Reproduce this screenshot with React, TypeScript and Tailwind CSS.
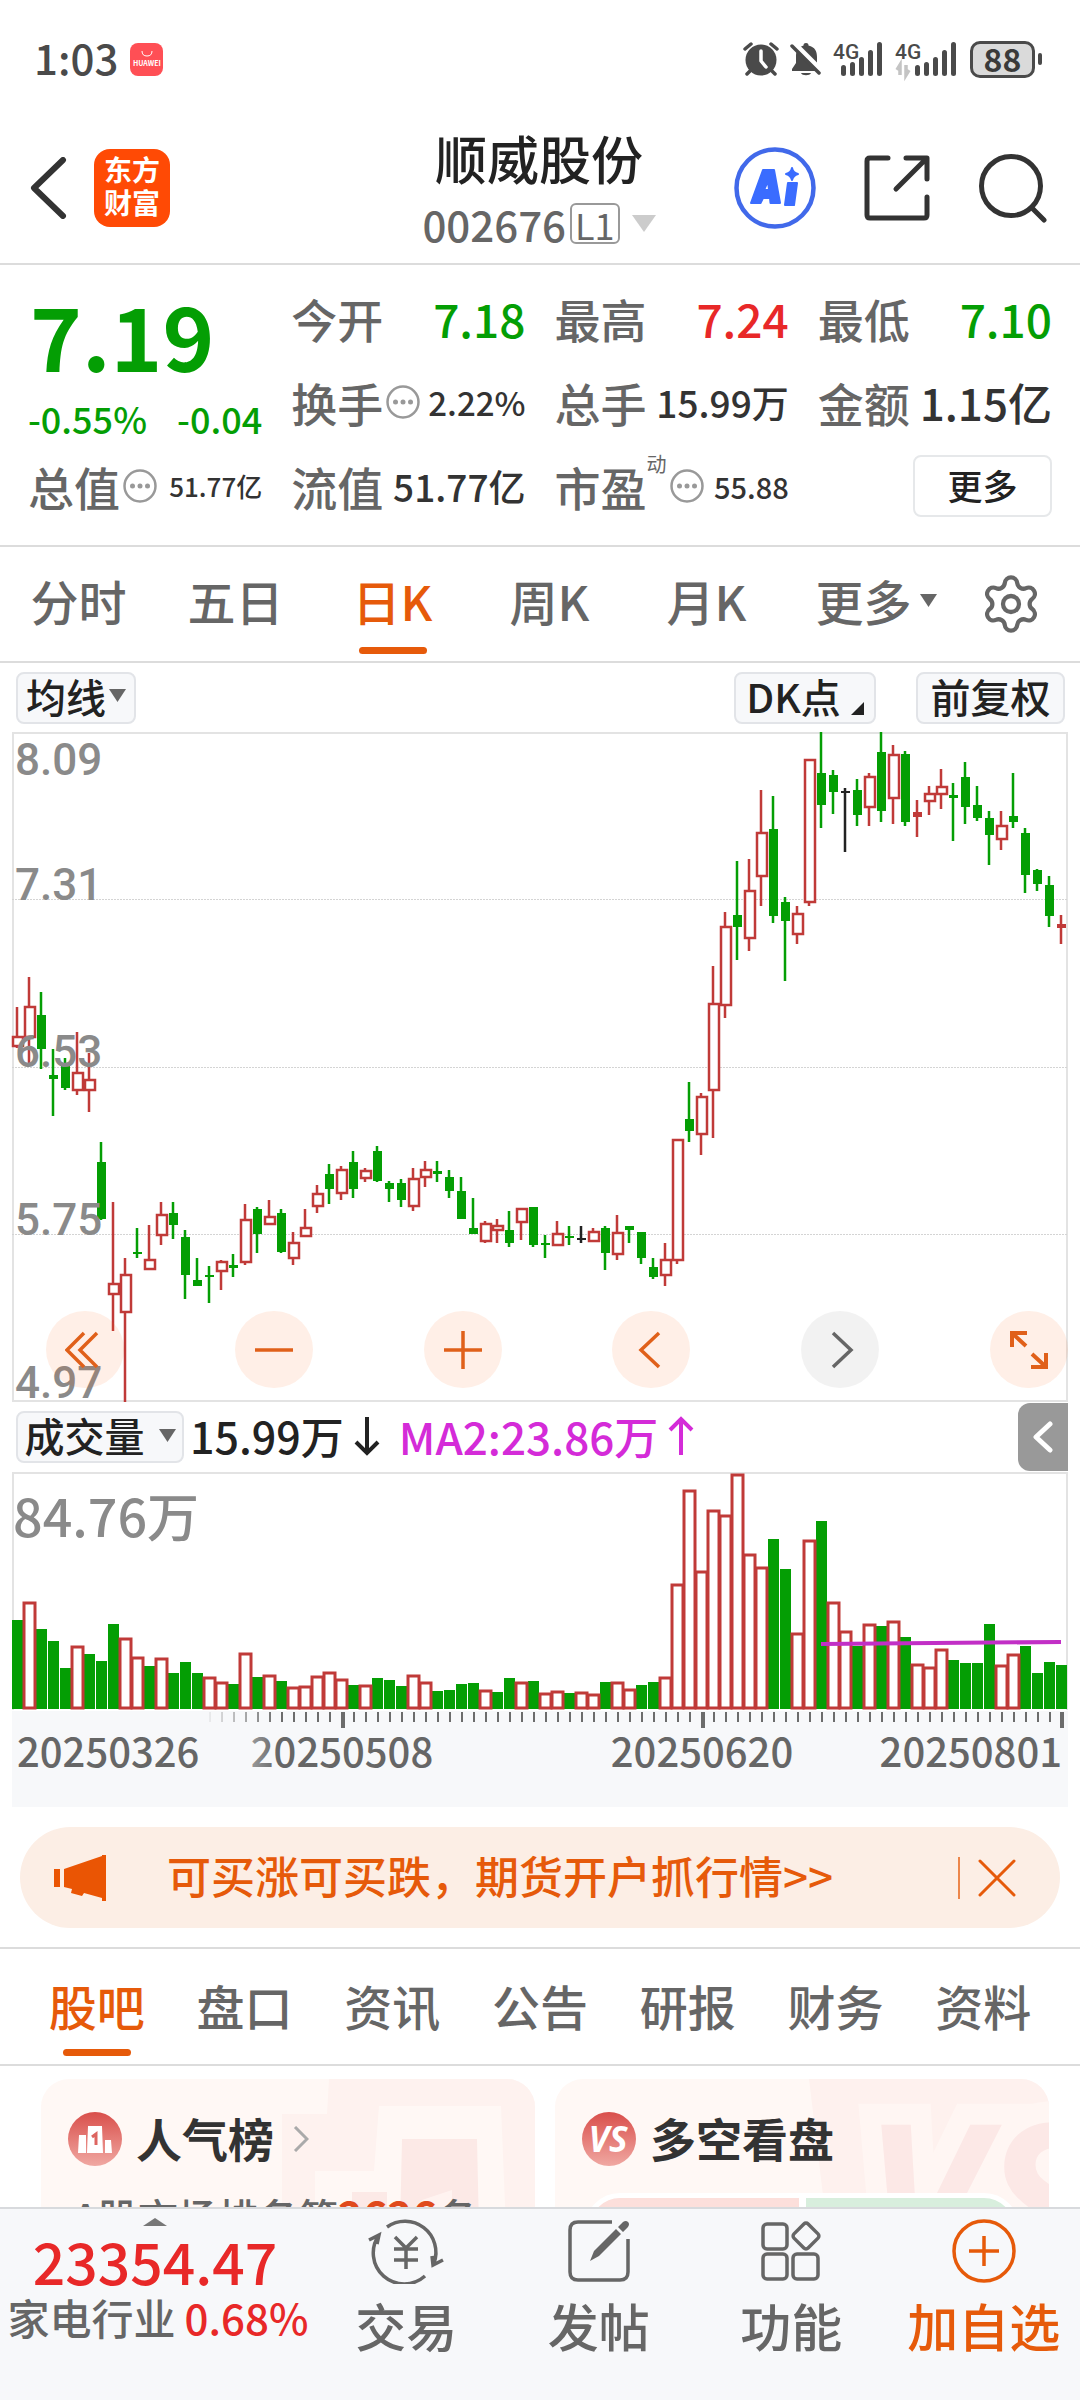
import React from "react";
import { Settings } from "lucide-react";

type Kind = "r" | "g" | "k" | "R";
type Candle = [Kind, number, number, number, number];

const RED = "#c03a38";
const GREEN = "#049e04";
const INK = "#222222";
const FONT = "font-['Noto_Sans_CJK_SC','Noto_Sans',sans-serif]";

// kind, high, body top, body bottom, low — in chart units measured downwards
const CANDLES: Candle[] = [
  ["r", 643, 708, 732, 735], ["r", 575, 640, 712, 768], ["g", 609, 662, 738, 782], ["g", 738, 796, 804, 887],
  ["g", 758, 770, 825, 830], ["r", 700, 789, 832, 840], ["r", 747, 804, 832, 878], ["g", 945, 990, 1118, 1120],
  ["r", 1080, 1262, 1289, 1368], ["r", 1206, 1242, 1328, 1528], ["g", 1138, 1191, 1195, 1205], ["r", 1132, 1208, 1231, 1231],
  ["r", 1080, 1107, 1155, 1176], ["g", 1080, 1105, 1132, 1162], ["g", 1142, 1158, 1243, 1297], ["g", 1206, 1254, 1268, 1268],
  ["g", 1224, 1244, 1248, 1306], ["r", 1210, 1213, 1236, 1277], ["g", 1196, 1222, 1227, 1248], ["r", 1085, 1117, 1217, 1220],
  ["g", 1090, 1095, 1151, 1195], ["r", 1076, 1111, 1131, 1131], ["g", 1095, 1105, 1191, 1195], ["r", 1148, 1170, 1207, 1220],
  ["r", 1095, 1136, 1159, 1159], ["r", 1042, 1059, 1092, 1104], ["g", 994, 1018, 1050, 1084], ["r", 999, 1006, 1063, 1075],
  ["g", 965, 990, 1050, 1070], ["r", 1004, 1009, 1029, 1036], ["g", 955, 965, 1032, 1036], ["g", 1033, 1038, 1050, 1080],
  ["g", 1028, 1037, 1075, 1090], ["r", 1004, 1025, 1092, 1099], ["r", 989, 1005, 1025, 1046], ["g", 989, 1010, 1017, 1036],
  ["g", 1008, 1023, 1055, 1071], ["g", 1023, 1056, 1118, 1118], ["g", 1071, 1138, 1152, 1152], ["r", 1123, 1126, 1169, 1171],
  ["r", 1119, 1131, 1144, 1171], ["g", 1100, 1142, 1172, 1181], ["r", 1093, 1093, 1126, 1166], ["g", 1090, 1091, 1175, 1181],
  ["g", 1153, 1172, 1176, 1205], ["r", 1123, 1150, 1179, 1179], ["g", 1133, 1155, 1161, 1176], ["k", 1133, 1160, 1164, 1171],
  ["r", 1138, 1145, 1169, 1169], ["g", 1133, 1138, 1195, 1233], ["r", 1109, 1146, 1198, 1210], ["g", 1133, 1133, 1142, 1171],
  ["g", 1147, 1148, 1205, 1219], ["g", 1205, 1225, 1248, 1252], ["r", 1172, 1208, 1245, 1268], ["r", 939, 939, 1213, 1219],
  ["g", 811, 894, 921, 945], ["r", 836, 842, 929, 974], ["r", 551, 635, 832, 936], ["r", 431, 462, 640, 667],
  ["g", 316, 437, 464, 537], ["r", 311, 380, 491, 517], ["r", 157, 251, 352, 417], ["g", 171, 244, 440, 455],
  ["g", 397, 407, 450, 585], ["r", 417, 433, 482, 502], ["r", 87, 87, 409, 417], ["g", 27, 119, 190, 243],
  ["g", 113, 123, 161, 210], ["k", 152, 159, 164, 296], ["g", 132, 157, 214, 237], ["r", 119, 125, 197, 238],
  ["g", 27, 71, 204, 228], ["r", 56, 77, 178, 234], ["g", 69, 76, 228, 238], ["R", 180, 207, 217, 262],
  ["r", 148, 164, 184, 214], ["r", 109, 149, 168, 199], ["g", 142, 168, 175, 272], ["g", 95, 128, 195, 234],
  ["g", 148, 190, 220, 227], ["g", 205, 220, 258, 325], ["r", 205, 236, 269, 291], ["g", 119, 215, 228, 243],
  ["g", 243, 253, 348, 388], ["g", 334, 336, 367, 383], ["g", 349, 369, 440, 464], ["R", 436, 457, 467, 502],
];

const VOLUMES: [Kind, number][] = [
  ["g", 690], ["r", 633], ["g", 716], ["g", 753], ["g", 834], ["r", 764], ["g", 790], ["g", 811], ["g", 702], ["r", 741], ["r", 796],
  ["g", 828], ["r", 800], ["g", 849], ["g", 816], ["g", 849], ["r", 856], ["r", 873], ["g", 881], ["r", 784], ["g", 861], ["r", 852],
  ["g", 873], ["r", 888], ["r", 884], ["r", 853], ["r", 841], ["r", 862], ["g", 884], ["r", 881], ["g", 864], ["g", 868], ["g", 888],
  ["r", 852], ["r", 872], ["g", 903], ["g", 899], ["g", 880], ["g", 878], ["r", 896], ["g", 904], ["g", 862], ["r", 871], ["g", 871],
  ["r", 906], ["r", 900], ["g", 909], ["r", 903], ["r", 907], ["g", 876], ["r", 871], ["r", 892], ["g", 885], ["g", 876], ["r", 858],
  ["r", 578], ["r", 297], ["r", 539], ["r", 355], ["r", 370], ["r", 247], ["r", 487], ["r", 528], ["g", 445], ["g", 537], ["r", 724],
  ["r", 446], ["g", 391], ["r", 631], ["r", 718], ["g", 767], ["r", 697], ["g", 708], ["r", 690], ["g", 740], ["r", 818], ["r", 827],
  ["r", 773], ["g", 809], ["g", 819], ["g", 819], ["g", 702], ["r", 822], ["r", 787], ["g", 766], ["g", 847], ["g", 816], ["g", 823],
];

const cx = (i: number) => 5 + i * 12;
const py = (v: number) => Math.round((v - 27) / 2.24);
const vy = (v: number) => Math.round((v - 245) / 3);

function StatusBar() {
  return (
    <div className="flex h-[118px] items-center justify-between pl-[34px] pr-[38px] text-[#4a4a4a]">
      <div className="flex items-center gap-[12px]">
        <span className="pb-[4px] text-[42px] font-medium leading-none">1:03</span>
        <span className="flex h-[33px] w-[33px] flex-col items-center justify-center rounded-[8px] bg-[#ff4f55] text-white">
          <svg viewBox="0 0 12 8" className="h-[8px] w-[12px]" fill="none" stroke="currentColor">
            <path d="M1 1 Q1 6 6 6 Q11 6 11 1" />
          </svg>
          <span className="text-[7px] font-bold leading-[10px]">HUAWEI</span>
        </span>
      </div>
      <div className="flex items-center">
        <svg viewBox="0 0 36 34" className="mr-[11px] h-[34px] w-[36px]" fill="currentColor">
          <circle cx="18" cy="18" r="15.5" />
          <path d="M2 7 L8 2 M34 7 L28 2 M7 29 L4 32 M29 29 L32 32" stroke="currentColor" strokeWidth="3.5" strokeLinecap="round" />
          <path d="M18 9 V19 L23 25" fill="none" stroke="#fff" strokeWidth="3.5" strokeLinecap="round" strokeLinejoin="round" />
        </svg>
        <svg viewBox="0 0 32 34" className="mr-[11px] h-[34px] w-[32px]" fill="currentColor">
          <path d="M16 1 C18 1 18.500 2 18.500 3.500 C25 5 27 9.500 27 15 V21 L30 27 V29 H2 V27 L6 21 V14 C6 8.500 8.500 5 13.500 3.500 C13.500 2 14 1 16 1Z" />
          <path d="M11 31 H21 C20 34 12 34 11 31Z" />
          <path d="M4 1 L34 31" stroke="#fff" strokeWidth="5" />
          <path d="M2 4 L29 31" stroke="currentColor" strokeWidth="3.500" strokeLinecap="round" />
        </svg>
        <Signal />
        <Signal data />
        <span className="flex h-[37px] w-[65px] items-center justify-center rounded-[10px] border-[3px] border-[#4a4a4a] bg-[#dadada] pb-[2px] text-[32px] font-bold leading-none text-[#3a3a3a]">
          88
        </span>
        <span className="ml-[3px] h-[12px] w-[4px] rounded-[2px] bg-[#4a4a4a]" />
      </div>
    </div>
  );
}

function Signal({ data = false }: { data?: boolean }) {
  const bars = [11, 14, 19, 26, 34];
  const x0 = data ? 20 : 8;
  return (
    <svg viewBox={data ? "0 0 62 36" : "0 0 50 36"} className={data ? "mr-[13px] h-[36px] w-[62px] overflow-visible" : "mr-[12px] h-[36px] w-[50px] overflow-visible"} fill="currentColor">
      <text x="0" y="18" fontSize="21" fontWeight="500" className="font-['Roboto',sans-serif]">4G</text>
      {bars.map((h, i) => (
        <rect key={i} x={x0 + i * 9} y={35 - h} width="5" height={h} rx="2.5" />
      ))}
      {data && <path d="M5 34 V24 L2 29 M11 24 V34 L14 29" fill="none" stroke="#c4c4c4" strokeWidth="3.500" />}
    </svg>
  );
}

function Header() {
  return (
    <header className="grid h-[147px] grid-cols-[1fr_auto_1fr] items-center border-b-2 border-[#dcdcdc] pl-[30px] pr-[32px] pb-[6px] text-[#333]">
      <div className="flex items-center gap-[26px]">
        <button aria-label="返回">
          <svg viewBox="0 0 38 62" className="h-[62px] w-[38px]" fill="none" stroke="currentColor" strokeWidth="6" strokeLinecap="round" strokeLinejoin="round">
            <path d="M33 3 L4 31 L33 59" />
          </svg>
        </button>
        <div className="flex h-[78px] w-[76px] flex-col items-center justify-center rounded-[16px] bg-[#ff4a05] pb-[3px] text-[28px] font-bold leading-[33px] text-white">
          <span>东方</span>
          <span>财富</span>
        </div>
      </div>
      <div className="flex flex-col items-center gap-[16px]">
        <h1 className="text-[52px] font-medium leading-[56px] text-[#222]">顺威股份</h1>
        <button className="flex items-center text-[42px] font-medium leading-[44px] text-[#666]">
          002676
          <span className="ml-[4px] flex h-[41px] items-center rounded-[6px] border-2 border-[#999] px-[3px] text-[36px] font-normal leading-none">L1</span>
          <svg viewBox="0 0 24 17" className="ml-[12px] h-[17px] w-[24px]" fill="#ccc"><path d="M0 0 H24 L12 17Z" /></svg>
        </button>
      </div>
      <div className="flex items-center justify-end gap-12">
        <button aria-label="AI">
          <svg viewBox="0 0 82 82" className="h-[82px] w-[82px]">
            <circle cx="41" cy="41" r="38.500" fill="none" stroke="#4169ea" strokeWidth="4.500" />
            <g fill="#3a6cff" stroke="#3a6cff" strokeWidth="2" strokeLinejoin="round">
              <path fillRule="evenodd" d="M29 23 H40 L46 56 H36.500 L36 51 H29 L26.500 56 H17Z M34 34 L30 43 H35Z" />
              <path d="M54 36 H63 L60 58 H51Z" />
              <path d="M58 21 Q59 26 64 27 Q59 28.500 58 33 Q57 28.500 52 27 Q57 26 58 21Z" />
            </g>
          </svg>
        </button>
        <button aria-label="分享">
          <svg viewBox="0 0 66 66" className="h-[66px] w-[66px]" fill="none" stroke="currentColor" strokeWidth="5" strokeLinecap="round" strokeLinejoin="round">
            <path d="M24 3 H6 Q3 3 3 6 V60 Q3 63 6 63 H60 Q63 63 63 60 V42" />
            <path d="M42 3 H63 V24 M61 5 L32 34" />
          </svg>
        </button>
        <button aria-label="搜索">
          <svg viewBox="0 0 70 70" className="h-[70px] w-[70px]" fill="none" stroke="currentColor" strokeWidth="5" strokeLinecap="round">
            <circle cx="33" cy="33" r="29.500" />
            <path d="M54 55 L66 67" />
          </svg>
        </button>
      </div>
    </header>
  );
}

function Info() {
  return (
    <svg viewBox="0 0 34 34" className="ml-[3px] h-[34px] w-[34px] shrink-0" fill="#999">
      <circle cx="17" cy="17" r="15.500" fill="none" stroke="#999" strokeWidth="2.500" />
      <circle cx="9.500" cy="17" r="2.500" />
      <circle cx="17" cy="17" r="2.500" />
      <circle cx="24.500" cy="17" r="2.500" />
    </svg>
  );
}

function Stat({ label, value, valueClass, info, sup }: { label: string; value: string; valueClass: string; info?: boolean; sup?: string }) {
  return (
    <div className="flex items-center justify-between whitespace-nowrap leading-none">
      <div className="flex items-center">
        <dt className="text-[46px] font-medium text-[#666]">{label}</dt>
        {sup && <sup className="mb-[24px] text-[20px] leading-none text-[#666]">{sup}</sup>}
        {info && <Info />}
      </div>
      <dd className={valueClass}>{value}</dd>
    </div>
  );
}

function Quote() {
  return (
    <section className="border-b-2 border-[#dcdcdc] px-[28px] pb-[17px] pt-[11px]">
      <dl className="grid grid-cols-4 grid-rows-[84px_84px_84px] gap-x-[29px]">
        <div className="row-span-2 flex flex-col gap-[12px] whitespace-nowrap leading-none text-[#049e04]">
          <strong className="pl-[2px] pt-[4px] text-[88px] font-bold leading-[108px]">7.19</strong>
          <div className="flex justify-between text-[36px] font-medium">
            <span>-0.55%</span>
            <span>-0.04</span>
          </div>
        </div>
        <Stat label="今开" value="7.18" valueClass="text-[46px] font-medium text-[#049e04]" />
        <Stat label="最高" value="7.24" valueClass="text-[46px] font-medium text-[#e82828]" />
        <Stat label="最低" value="7.10" valueClass="text-[46px] font-medium text-[#049e04]" />
        <Stat label="换手" info value="2.22%" valueClass="text-[33px] font-medium text-[#333]" />
        <Stat label="总手" value="15.99万" valueClass="text-[37px] font-medium text-[#333]" />
        <Stat label="金额" value="1.15亿" valueClass="text-[44px] font-medium text-[#333]" />
        <Stat label="总值" info value="51.77亿" valueClass="text-[26px] font-medium text-[#333]" />
        <Stat label="流值" value="51.77亿" valueClass="text-[37px] font-medium text-[#333]" />
        <Stat label="市盈" sup="动" info value="55.88" valueClass="text-[29px] font-medium text-[#333]" />
        <div className="flex items-center justify-end">
          <button className="h-[62px] w-[139px] rounded-[8px] border-2 border-[#e6e8ea] pb-[3px] text-[35px] font-medium leading-none text-[#222]">更多</button>
        </div>
      </dl>
    </section>
  );
}

function PeriodTabs() {
  const tabs = ["分时", "五日", "日K", "周K", "月K", "更多"];
  return (
    <nav className="flex h-[116px] border-b-2 border-[#dcdcdc] font-medium text-[#666]">
      {tabs.map((t) => (
        <button key={t} className={t === "日K" ? "relative flex flex-1 items-center justify-center pb-[8px] text-[48px] leading-none text-[#e65a0a]" : "flex flex-1 items-center justify-center whitespace-nowrap pb-[8px] text-[48px] leading-none"}>
          {t}
          {t === "日K" && <span className="absolute bottom-[7px] h-[7px] w-[68px] rounded-full bg-[#e65a0a]" />}
          {t === "更多" && <Down className="-mr-[25px] ml-[8px] h-[13px] w-[17px]" />}
        </button>
      ))}
      <button aria-label="设置" className="flex w-[138px] items-center justify-center">
        <Settings className="h-[64px] w-[64px]" strokeWidth={1.6} />
      </button>
    </nav>
  );
}

function Down({ className }: { className: string }) {
  return <svg viewBox="0 0 17 13" className={className} fill="#666"><path d="M0 0 H17 L8.500 13Z" /></svg>;
}

function Chip({ children, className }: { children: React.ReactNode; className: string }) {
  return (
    <button className={`${className} flex h-[52px] items-center justify-center whitespace-nowrap rounded-[8px] border-2 border-[#e2e4e8] bg-[#f7f8fa] pb-[4px] text-[40px] font-medium leading-none text-[#222]`}>
      {children}
    </button>
  );
}

function PriceChart() {
  return (
    <svg viewBox="0 0 1056 670" className="block h-auto w-full overflow-visible" role="img" aria-label="日K线图">
      <rect x="1" y="1" width="1054" height="668" fill="none" stroke="#e3e3e3" strokeWidth="2" />
      {[167, 335, 502].map((y) => (
        <path key={y} d={`M0 ${y + 0.5} H1056`} stroke="#d4d4d4" strokeDasharray="2 1" />
      ))}
      {CANDLES.map(([k, hi, top, bot, lo], i) => {
        const x = cx(i);
        const color = k === "g" ? GREEN : k === "k" ? INK : RED;
        const t = py(top);
        const h = Math.max(py(bot) - t, 2);
        return (
          <g key={i}>
            <rect x={x - 1.25} y={py(hi)} width="2.5" height={py(lo) - py(hi)} fill={color} />
            {k === "r" ? (
              <rect x={x - 4} y={t + 1} width="10" height={Math.max(h - 2, 3)} fill="#fff" stroke={color} strokeWidth="2.5" />
            ) : (
              <rect x={x - 4} y={t} width="9" height={h} fill={color} />
            )}
          </g>
        );
      })}
      <g fill="#8a8a8a" fontSize="44" fontWeight="500" className="font-['Roboto',sans-serif]">
        <text x="3" y="43">8.09</text>
        <text x="3" y="168">7.31</text>
        <text x="3" y="335">6.53</text>
        <text x="3" y="503">5.75</text>
        <text x="3" y="666">4.97</text>
      </g>
    </svg>
  );
}

const ctl = "flex h-[77px] w-[78px] items-center justify-center rounded-full bg-[#fe6410]/10 text-[#e0601a]";

function ChartControls() {
  const s = { fill: "none", stroke: "currentColor", strokeWidth: 3.5, viewBox: "0 0 40 40", className: "h-[40px] w-[40px]" };
  return (
    <div className="absolute bottom-[14px] left-[34px] right-0 flex justify-between">
      <button className={ctl} aria-label="最早"><svg {...s}><path d="M19 3 L2 20 L19 37 M32 3 L15 20 L32 37" /></svg></button>
      <button className={ctl} aria-label="缩小"><svg {...s}><path d="M1 20 H39" /></svg></button>
      <button className={ctl} aria-label="放大"><svg {...s}><path d="M1 20 H39 M20 1 V39" /></svg></button>
      <button className={ctl} aria-label="左移"><svg {...s}><path d="M28 3 L10 20 L28 37" /></svg></button>
      <button className="flex h-[77px] w-[78px] items-center justify-center rounded-full bg-black/5 text-[#666]" aria-label="右移"><svg {...s}><path d="M13 3 L31 20 L13 37" /></svg></button>
      <button className={ctl} aria-label="全屏"><svg {...s} strokeWidth={4}><path d="M3 17 V3 H18 M4 4 L17 16 M37 23 V37 H22 M36 36 L23 24" /></svg></button>
    </div>
  );
}

function VolumeChart() {
  return (
    <svg viewBox="0 0 1056 335" className="block h-auto w-full overflow-visible" role="img" aria-label="成交量">
      <defs>
        <linearGradient id="fade" x1="0" x2="1" y1="0" y2="0">
          <stop offset="0" stopColor="#f7f8fa" />
          <stop offset="1" stopColor="#f7f8fa" stopOpacity="0" />
        </linearGradient>
      </defs>
      <rect y="239" width="1056" height="96" fill="#f7f8fa" />
      <path d="M1 238 V1 H1055 V238" fill="none" stroke="#e3e3e3" strokeWidth="2" />
      {VOLUMES.map(([k, v], i) =>
        k === "g" ? (
          <rect key={i} x={cx(i) - 5} y={vy(v)} width="11" height={237 - vy(v)} fill={GREEN} />
        ) : null,
      )}
      {VOLUMES.map(([k, v], i) =>
        k === "r" ? (
          <rect key={i} x={cx(i) - 5} y={vy(v) + 2} width="11" height={234 - vy(v)} fill="#fff" stroke={RED} strokeWidth="3" />
        ) : null,
      )}
      <path d="M809 172 L1049 170" stroke="#c22fc6" strokeWidth="4" />
      {VOLUMES.map((_, i) =>
        i < 16 ? null : (
          <rect key={i} x={i === 87 ? 1048 : cx(i)} y="240" width={i === 27 || i === 57 || i === 87 ? 4 : 2} height={i === 27 || i === 57 || i === 87 ? 16 : 10} fill="#6c6c6c" />
        ),
      )}
      <g fill="#666" fontSize="40" fontWeight="500" className="font-['Noto_Sans_CJK_SC',sans-serif]">
        <text x="330" y="295" textAnchor="middle">20250508</text>
        <text x="690" y="295" textAnchor="middle">20250620</text>
        <text x="1050" y="295" textAnchor="end">20250801</text>
        <rect x="190" y="239" width="76" height="62" fill="url(#fade)" />
        <text x="5" y="295">20250326</text>
      </g>
      <text x="1" y="65" fill="#8a8a8a" fontSize="52" fontWeight="500" className="font-['Noto_Sans_CJK_SC',sans-serif]">84.76万</text>
    </svg>
  );
}

function Charts() {
  return (
    <section className="pl-[12px] pr-[12px]">
      <div className="flex h-[69px] items-center pl-[4px] pr-[3px]">
        <Chip className="w-[120px]">均线<Down className="ml-[3px] h-[13px] w-[17px]" /></Chip>
        <Chip className="ml-auto w-[142px]">
          DK点
          <svg viewBox="0 0 13 13" className="ml-[10px] mt-[26px] h-[13px] w-[13px]" fill="#222"><path d="M13 0 V13 H0Z" /></svg>
        </Chip>
        <Chip className="ml-[40px] w-[149px]">前复权</Chip>
      </div>
      <div className="relative">
        <PriceChart />
        <ChartControls />
      </div>
      <div className="flex h-[70px] items-center whitespace-nowrap pl-[4px] text-[43px] font-medium leading-none">
        <Chip className="w-[168px]">成交量<Down className="ml-[14px] h-[13px] w-[17px]" /></Chip>
        <span className="ml-[6px] flex items-center pb-[3px] text-[#222]">15.99万<Arrow /></span>
        <span className="ml-[19px] flex items-center pb-[3px] text-[44px] text-[#d42bd8]">MA2:23.86万<Arrow up /></span>
        <button aria-label="展开" className="ml-auto flex h-[68px] w-[50px] items-center justify-center rounded-l-[12px] bg-[#999] text-white">
          <svg viewBox="0 0 20 32" className="h-[32px] w-[20px]" fill="none" stroke="currentColor" strokeWidth="5" strokeLinecap="round" strokeLinejoin="round"><path d="M17 3 L3 16 L17 29" /></svg>
        </button>
      </div>
      <VolumeChart />
    </section>
  );
}

function Arrow({ up = false }: { up?: boolean }) {
  return (
    <svg viewBox="0 0 26 40" className="ml-[10px] h-[40px] w-[26px]" fill="none" stroke="currentColor" strokeWidth="4">
      <path d={up ? "M13 39 V3 M2 14 L13 3 L24 14" : "M13 1 V37 M2 26 L13 37 L24 26"} />
    </svg>
  );
}

function Banner() {
  return (
    <div className="mx-[20px] mt-[20px] flex h-[101px] items-center rounded-full bg-[#fceee5] pl-[34px] pr-[44px] text-[#e65a0a]">
      <svg viewBox="0 0 52 46" className="h-[46px] w-[52px]" fill="#ea5504">
        <path d="M0 14 H6 V32 H0Z M10 14 L48 1 V0 H52 V46 H48 V43 L30 38 L28 41 L17 38 L18 34 L10 32Z" />
      </svg>
      <a href="#futures" className="ml-[61px] whitespace-nowrap pb-[5px] text-[44px] font-medium leading-none">可买涨可买跌，期货开户抓行情&gt;&gt;</a>
      <span className="ml-auto h-[42px] w-[2px] bg-[#e65a0a]/70" />
      <button aria-label="关闭" className="ml-[18px]">
        <svg viewBox="0 0 38 38" className="h-[38px] w-[38px]" fill="none" stroke="currentColor" strokeWidth="3" strokeLinecap="round"><path d="M2 2 L36 36 M36 2 L2 36" /></svg>
      </button>
    </div>
  );
}

function InfoTabs() {
  const tabs = ["股吧", "盘口", "资讯", "公告", "研报", "财务", "资料"];
  return (
    <nav className="mt-[19px] grid h-[119px] grid-cols-7 border-y-2 border-[#dcdcdc] px-[23px] font-medium text-[#666]">
      {tabs.map((t, i) => (
        <button key={t} className={i === 0 ? "relative flex items-center justify-center pb-[3px] text-[48px] leading-none text-[#e65a0a]" : "flex items-center justify-center pb-[3px] text-[48px] leading-none"}>
          {t}
          {i === 0 && <span className="absolute bottom-[8px] h-[7px] w-[68px] rounded-full bg-[#e65a0a]" />}
        </button>
      ))}
    </nav>
  );
}

function Badge({ id, children }: { id: string; children: React.ReactNode }) {
  return (
    <svg viewBox="0 0 54 54" className="h-[54px] w-[54px] shrink-0 overflow-visible">
      <defs>
        <linearGradient id={id} x1="0" x2="0" y1="0" y2="1">
          <stop offset="0" stopColor="#d94f4b" />
          <stop offset="1" stopColor="#f0a8a2" />
        </linearGradient>
      </defs>
      <circle cx="27" cy="27" r="27" fill={`url(#${id})`} />
      {children}
    </svg>
  );
}

function Cards() {
  return (
    <section className="grid grid-cols-2 gap-[20px] px-[41px] pr-[31px] pt-[13px]">
      <article className="relative h-[280px] overflow-hidden rounded-[28px] bg-[#fff8f5] px-[27px] pt-[29px]">
        <svg viewBox="0 0 494 280" className="absolute right-0 top-0 h-[280px] w-[494px]">
          <path d="M288 0 L286 35 H241 V150 H274 V92 H333 L338 27 H460 L465 150 H494 V0Z" fill="#fef2ef" />
          <path d="M361 60 H436 L438 150 H359Z M311 113 H346 V150 H311Z" fill="#fce9e6" />
          <path d="M381 121 L411 111 V150 H381Z" fill="#fff3f0" />
        </svg>
        <div className="relative flex items-center">
          <Badge id="rank">
            <path d="M11 23 H18 V41 H10Z M20 14 H34 L35 41 H19Z M37 28 H43 L44 41 H37Z" fill="#fff" />
            <path d="M24 25 L28 22 V33" fill="none" stroke="#dd6560" strokeWidth="3" />
          </Badge>
          <h2 className="ml-[14px] pb-[4px] text-[46px] font-bold leading-[58px] text-[#333]">人气榜</h2>
          <svg viewBox="0 0 16 26" className="ml-[19px] h-[26px] w-[16px]" fill="none" stroke="#aaa" strokeWidth="3"><path d="M2 1 L14 13 L2 25" /></svg>
        </div>
        <p className="relative mt-[23px] whitespace-nowrap pl-[5px] text-[40px] font-medium leading-[44px] text-[#666]">
          A股市场排名第<b className="text-[42px] text-[#e04a1c]">2626</b>名
        </p>
      </article>
      <article className="relative h-[280px] overflow-hidden rounded-[28px] bg-[#fff8f5] px-[27px] pt-[29px]">
        <svg viewBox="0 0 494 280" className="absolute right-0 top-0 h-[280px] w-[494px]">
          <path d="M254 0 L272 150 H494 V0Z" fill="#fef1ee" />
          <text x="308" y="192" fontSize="204" fontWeight="700" fontStyle="italic" fill="#fce8e6" stroke="#fff6f3" strokeWidth="42" paintOrder="stroke" className="font-['Open_Sans',sans-serif]">VS</text>
        </svg>
        <div className="relative flex items-center">
          <Badge id="versus">
            <text x="26" y="40" textAnchor="middle" fontSize="35" fontWeight="700" fontStyle="italic" fill="#fff" className="font-['Open_Sans',sans-serif]">VS</text>
          </Badge>
          <h2 className="ml-[14px] pb-[4px] text-[46px] font-bold leading-[58px] text-[#333]">多空看盘</h2>
        </div>
        <div className="relative mx-[3px] mt-[23px] flex h-[70px] gap-[7px] overflow-hidden rounded-full border-[5px] border-white bg-white">
          <span className="flex-1 bg-[#fcdfdb]" />
          <span className="flex-1 bg-[#d8eedd]" />
        </div>
      </article>
    </section>
  );
}

function BottomBar() {
  const item = "flex flex-1 flex-col items-center gap-[11px] pt-[9px] text-[51px] font-medium leading-[60px]";
  const s = { fill: "none", stroke: "currentColor", strokeWidth: 3.5, viewBox: "0 0 66 66", className: "h-[66px] w-[76px]" };
  return (
    <footer className="flex h-[193px] shrink-0 border-t-2 border-[#d8dadd] bg-[#f7f8fa] text-[#666]">
      <button className="flex w-[310px] flex-col items-center whitespace-nowrap pt-[9px]">
        <svg viewBox="0 0 24 8" className="h-[8px] w-[24px]" fill="#777"><path d="M0 8 L12 0 L24 8Z" /></svg>
        <span className="mt-[4px] text-[57px] font-medium leading-[60px] text-[#e82828]">23354.47</span>
        <span className="mt-[2px] flex items-center gap-[9px] pl-[6px] text-[42px] font-medium leading-[50px]">
          家电行业<span className="text-[#e82828]">0.68%</span>
        </span>
      </button>
      <button className={item}>
        <svg {...s} viewBox="-5 0 76 66">
          <path d="M14 9 A31 31 0 0 1 61 45 M59 38 L60 47 L70 42" />
          <path d="M52 58 A31 31 0 0 1 6 17 M-4 22 L6 17 L4 26" />
          <path d="M22 19 L33 30 L44 19 M33 30 V51 M21 31 H45 M21 42 H45" />
        </svg>
        <span>交易</span>
      </button>
      <button className={item}>
        <svg {...s}>
          <path d="M46 4 H12 Q4 4 4 12 V54 Q4 62 12 62 H54 Q62 62 62 54 V21" />
          <path d="M24 43 L28 33 L50 11 L55 16 L33 38Z M52 9 L57 4 Q60 2 62 4 Q64 6 62 9 L57 14Z" fill="currentColor" stroke="none" />
        </svg>
        <span>发帖</span>
      </button>
      <button className={item}>
        <svg {...s}>
          <rect x="5" y="6" width="24" height="25" rx="4" />
          <rect x="5" y="36" width="24" height="25" rx="4" />
          <rect x="35" y="36" width="25" height="25" rx="4" />
          <rect x="38" y="8" width="20" height="20" rx="3" transform="rotate(45 48 18)" />
        </svg>
        <span>功能</span>
      </button>
      <button className={`${item} text-[#e65a0a]`}>
        <svg {...s}>
          <circle cx="33" cy="33" r="30" />
          <path d="M18 33 H48 M33 18 V48" />
        </svg>
        <span className="whitespace-nowrap">加自选</span>
      </button>
    </footer>
  );
}

export default function App() {
  return (
    <div className={`${FONT} flex h-screen flex-col bg-white`}>
      <main className="min-h-0 flex-1 overflow-hidden">
        <StatusBar />
        <Header />
        <Quote />
        <PeriodTabs />
        <Charts />
        <Banner />
        <InfoTabs />
        <Cards />
      </main>
      <BottomBar />
    </div>
  );
}
